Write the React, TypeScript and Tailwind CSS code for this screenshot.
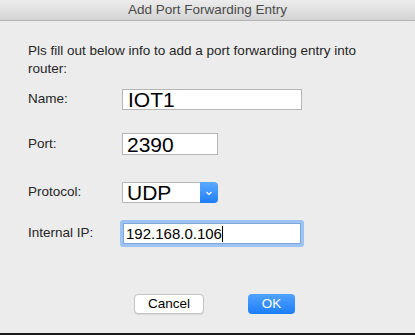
import React from "react";

export default function App() {
  const font = { fontFamily: '"Liberation Sans", Arial, sans-serif' };
  return (
    <div className="w-[415px] h-[335px] flex flex-col bg-[#ececec] overflow-hidden" style={font}>
      <div className="h-[21px] shrink-0 flex items-center justify-center bg-gradient-to-b from-[#ececec] to-[#d4d4d4] border-b border-[#b1b1b1] text-[13.5px] text-[#4a4a4a]">
        Add Port Forwarding Entry
      </div>
      <div className="flex-1 flex flex-col pl-[28px] pt-[21px] text-[13.5px] text-[#262626]">
        <p className="leading-[18px] w-[350px]">
          Pls fill out below info to add a port forwarding entry into router:
        </p>
        <div className="flex items-center mt-[11px] h-[21px]">
          <span className="w-[94px]">Name:</span>
          <div className="w-[180px] h-[21px] bg-white border border-[#b6b6b6] flex items-center pl-[5px] text-[21px] text-black leading-none">
            IOT1
          </div>
        </div>
        <div className="flex items-center mt-[23px] h-[22px]">
          <span className="w-[94px]">Port:</span>
          <div className="w-[96px] h-[22px] bg-white border border-[#b6b6b6] flex items-center pl-[4px] text-[21px] text-black leading-none">
            2390
          </div>
        </div>
        <div className="flex items-center mt-[27px] h-[21px]">
          <span className="w-[94px]">Protocol:</span>
          <div className="w-[96px] h-[21px] flex rounded-r-[4px] border border-[#b6b6b6] bg-white">
            <div className="flex-1 flex items-center pl-[4px] text-[21px] text-black leading-none">UDP</div>
            <div className="w-[18px] -my-[1px] -mr-[1px] rounded-r-[4px] bg-gradient-to-b from-[#5aa9fd] to-[#1c7ef8] flex items-center justify-center">
              <svg width="8" height="6" viewBox="0 0 8 6">
                <path d="M1.5 2 L4 4.5 L6.5 2" stroke="white" strokeWidth="1.2" fill="none" />
              </svg>
            </div>
          </div>
        </div>
        <div className="flex items-center mt-[17px] h-[27px]">
          <span className="w-[92px]">Internal IP:</span>
          <div className="w-[184px] h-[27px] rounded-[3px] bg-[#9cc3f1] p-[3px]">
            <div className="w-full h-full bg-white border border-[#7fa9dc] flex items-center pl-[2px] text-[15px] text-black leading-none">
              192.168.0.106<span className="inline-block w-px h-[16px] bg-black" />
            </div>
          </div>
        </div>
        <div className="flex mt-[47px] h-[20px]">
          <div className="ml-[106px] w-[70px] h-[20px] bg-white border border-[#c3c3c3] rounded-[4px] flex items-center justify-center text-[13.5px] text-black shadow-[0_1px_0_rgba(0,0,0,0.08)]">
            Cancel
          </div>
          <div className="ml-[44px] w-[47px] h-[20px] rounded-[4px] bg-gradient-to-b from-[#4fa2fd] to-[#1a7ef8] flex items-center justify-center text-[13.5px] text-white">
            OK
          </div>
        </div>
      </div>
      <div className="h-[2px] shrink-0 bg-[#1a1a1a]" />
    </div>
  );
}
